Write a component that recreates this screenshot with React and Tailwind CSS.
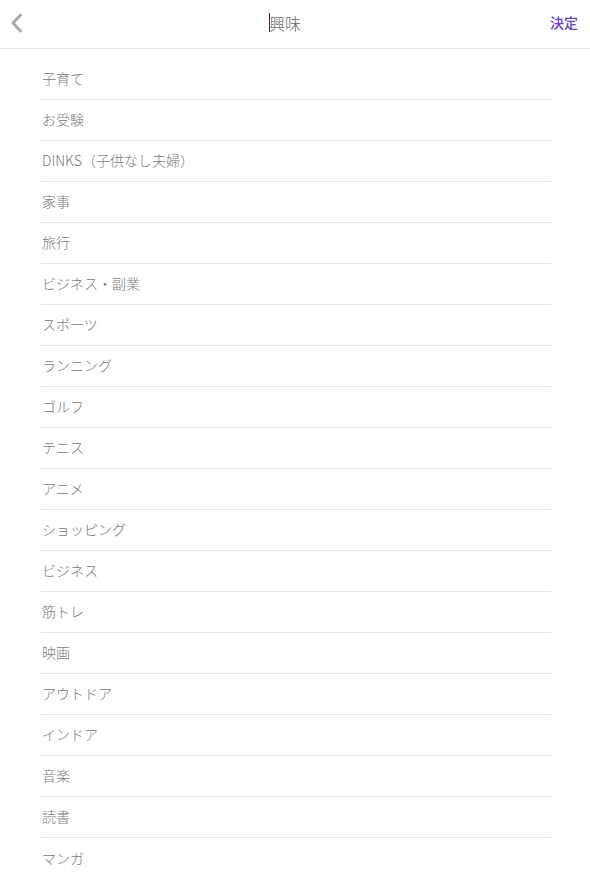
import React from "react";

const items = [
  "子育て",
  "お受験",
  "DINKS（子供なし夫婦）",
  "家事",
  "旅行",
  "ビジネス・副業",
  "スポーツ",
  "ランニング",
  "ゴルフ",
  "テニス",
  "アニメ",
  "ショッピング",
  "ビジネス",
  "筋トレ",
  "映画",
  "アウトドア",
  "インドア",
  "音楽",
  "読書",
  "マンガ",
];

export default function App() {
  return (
    <div
      className="w-[590px] min-h-[876px] bg-white"
      style={{ fontFamily: '"Noto Sans CJK JP", "Noto Sans", sans-serif' }}
    >
      <header className="h-[49px] border-b border-[#e3e3e3] flex items-center justify-between px-[10px] pb-[3px]">
        <button className="w-[40px] h-[40px] flex items-center">
          <svg width="14" height="22" viewBox="0 0 14 22" fill="none">
            <path d="M10.5 3 L3 11 L10.5 19" stroke="#aaaaaa" strokeWidth="3" strokeLinecap="round" strokeLinejoin="round" />
          </svg>
        </button>
        <div className="flex items-center text-[16px] text-[#666] font-light leading-none mr-[20px]">
          <span className="w-[1px] h-[19px] bg-[#333] mr-[-1px]"></span>
          <span>興味</span>
        </div>
        <button className="w-[40px] text-right text-[14px] font-medium text-[#6a3fd0] pr-[2px]">決定</button>
      </header>
      <ul className="ml-[41px] w-[510px] pt-[10px]">
        {items.map((t, i) => (
          <li
            key={i}
            className={
              "h-[41px] flex items-center pl-[1px] pb-[1px] text-[14px] text-[#7a7a7a] font-light " +
              (i < items.length - 1 ? "border-b border-[#e6e6e6]" : "")
            }
          >
            {t}
          </li>
        ))}
      </ul>
    </div>
  );
}
